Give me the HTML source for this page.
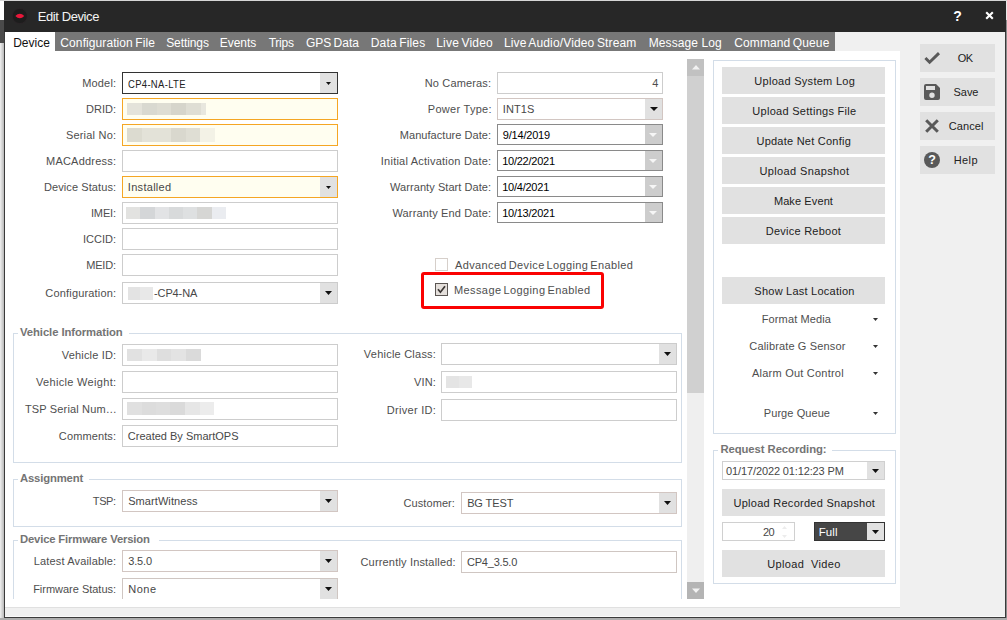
<!DOCTYPE html>
<html lang="en"><head><meta charset="utf-8"><title>Edit Device</title>
<style>
html,body{margin:0;padding:0}
body{width:1007px;height:620px;position:relative;overflow:hidden;background:#f0f0f0;font-family:"Liberation Sans", sans-serif;font-size:11px}
body div,body span.t,body svg{position:absolute}
.t{white-space:pre;display:block}
</style></head><body>
<div style="left:0px;top:0px;width:1007px;height:1px;background:#d6d6d6;"></div>
<div style="left:0px;top:1px;width:4px;height:19px;background:#ffffff;"></div>
<div style="left:0px;top:20px;width:4px;height:23px;background:#4a4a4a;"></div>
<div style="left:0px;top:43px;width:4px;height:577px;background:linear-gradient(90deg,#f0f0f0,#b8b8b8);"></div>
<div style="left:1006px;top:1px;width:1px;height:19px;background:#e8e8e8;"></div>
<div style="left:1006px;top:20px;width:1px;height:600px;background:#8c8c8c;"></div>
<div style="left:0px;top:618px;width:1007px;height:2px;background:#adadad;"></div>
<div style="left:4px;top:1px;width:1002px;height:617px;background:#3a3a3a;"></div>
<div style="left:5px;top:32px;width:1000px;height:585px;background:#f0f0f0;"></div>
<div style="left:5px;top:616px;width:1000px;height:1px;background:#fafafa;"></div>
<div style="left:4px;top:1px;width:1002px;height:31px;background:#272727;"></div>
<svg style="left:11px;top:7px" width="18" height="18" viewBox="0 0 18 18"><circle cx="8.8" cy="9" r="7.6" fill="#1d1d1d" stroke="#2c2428" stroke-width="0.8"/><path d="M4.3 9 Q8.8 4.3 13.3 9 Q8.8 13.7 4.3 9 Z" fill="#e8173a"/></svg>
<span class="t" id="t0" style="left:37.70px;top:6.80px;font-size:13px;color:#f4f4f4;line-height:20px;letter-spacing:-0.407px;">Edit Device</span>
<span class="t" id="t1" style="left:953.15px;top:6.35px;font-size:14px;color:#ffffff;line-height:20px;letter-spacing:0.150px;font-weight:bold;">?</span>
<svg style="left:985px;top:11px" width="9" height="9" viewBox="0 0 9 9"><path d="M1.2 1.2 L7.8 7.8 M7.8 1.2 L1.2 7.8" stroke="#fff" stroke-width="2.1" fill="none"/></svg>
<div style="left:5px;top:32px;width:830px;height:19px;background:#777777;"></div>
<div style="left:5px;top:32px;width:50px;height:19px;background:#ffffff;"></div>
<div style="left:5px;top:51px;width:895px;height:556px;background:#ffffff;"></div>
<div style="left:5px;top:607px;width:895px;height:1px;background:#e0e0e0;"></div>
<span class="t" id="t2" style="left:13.15px;top:32.84px;font-size:12px;color:#111;line-height:20px;letter-spacing:0.043px;">Device</span>
<span class="t" id="t3" style="left:60.37px;top:32.84px;font-size:12px;color:#fff;line-height:20px;letter-spacing:0.085px;word-spacing:-1.0px;">Configuration File</span>
<span class="t" id="t4" style="left:166.15px;top:32.84px;font-size:12px;color:#fff;line-height:20px;letter-spacing:-0.088px;">Settings</span>
<span class="t" id="t5" style="left:219.67px;top:32.84px;font-size:12px;color:#fff;line-height:20px;letter-spacing:0.003px;">Events</span>
<span class="t" id="t6" style="left:268.74px;top:32.84px;font-size:12px;color:#fff;line-height:20px;letter-spacing:-0.267px;">Trips</span>
<span class="t" id="t7" style="left:305.89px;top:32.84px;font-size:12px;color:#fff;line-height:20px;letter-spacing:0.013px;word-spacing:-1.0px;">GPS Data</span>
<span class="t" id="t8" style="left:370.78px;top:32.84px;font-size:12px;color:#fff;line-height:20px;letter-spacing:0.154px;word-spacing:-1.0px;">Data Files</span>
<span class="t" id="t9" style="left:436.26px;top:32.84px;font-size:12px;color:#fff;line-height:20px;letter-spacing:0.180px;word-spacing:-1.0px;">Live Video</span>
<span class="t" id="t10" style="left:503.89px;top:32.84px;font-size:12px;color:#fff;line-height:20px;letter-spacing:0.149px;word-spacing:-1.0px;">Live Audio/Video Stream</span>
<span class="t" id="t11" style="left:648.78px;top:32.84px;font-size:12px;color:#fff;line-height:20px;letter-spacing:0.078px;">Message Log</span>
<span class="t" id="t12" style="left:734.26px;top:32.84px;font-size:12px;color:#fff;line-height:20px;letter-spacing:0.112px;word-spacing:-1.0px;">Command Queue</span>
<span class="t" id="t13" style="left:82.26px;top:73.19px;font-size:11px;color:#4e4e4e;line-height:20px;letter-spacing:0.156px;">Model:</span>
<span class="t" id="t14" style="left:86.00px;top:99.19px;font-size:11px;color:#4e4e4e;line-height:20px;letter-spacing:0.028px;">DRID:</span>
<span class="t" id="t15" style="left:65.89px;top:125.19px;font-size:11px;color:#4e4e4e;line-height:20px;letter-spacing:0.204px;">Serial No:</span>
<span class="t" id="t16" style="left:46.00px;top:151.19px;font-size:11px;color:#4e4e4e;line-height:20px;letter-spacing:0.220px;">MACAddress:</span>
<span class="t" id="t17" style="left:44.00px;top:177.19px;font-size:11px;color:#4e4e4e;line-height:20px;letter-spacing:0.087px;">Device Status:</span>
<span class="t" id="t18" style="left:90.96px;top:203.19px;font-size:11px;color:#4e4e4e;line-height:20px;letter-spacing:-0.143px;">IMEI:</span>
<span class="t" id="t19" style="left:82.96px;top:229.19px;font-size:11px;color:#4e4e4e;line-height:20px;letter-spacing:0.019px;">ICCID:</span>
<span class="t" id="t20" style="left:86.26px;top:255.19px;font-size:11px;color:#4e4e4e;line-height:20px;letter-spacing:-0.190px;">MEID:</span>
<span class="t" id="t21" style="left:45.37px;top:283.19px;font-size:11px;color:#4e4e4e;line-height:20px;letter-spacing:0.173px;">Configuration:</span>
<div style="left:122px;top:72px;width:216px;height:22px;background:#fff;border:1px solid #333;box-sizing:border-box;"></div>
<div style="left:320px;top:73px;width:17px;height:20px;background:#e1e1e1;"></div>
<svg style="left:326.0px;top:81.5px" width="5" height="3" viewBox="0 0 5 3"><path d="M0 0 H5 L2.5 3 Z" fill="#111"/></svg>
<span class="t" id="t22" style="left:128.15px;top:73.99px;font-size:11px;color:#222;line-height:20px;letter-spacing:0.383px;transform:scaleX(0.86);transform-origin:0 0;">CP4-NA-LTE</span>
<div style="left:122px;top:98px;width:216px;height:22px;background:#fffef0;border:1px solid #f5a623;box-sizing:border-box;"></div>
<div style="left:127px;top:103px;width:15px;height:12px;background:#e4e3da;"></div>
<div style="left:142px;top:103px;width:15px;height:12px;background:#d9d9d0;"></div>
<div style="left:157px;top:103px;width:14px;height:12px;background:#deddd3;"></div>
<div style="left:171px;top:103px;width:15px;height:12px;background:#d6d5cb;"></div>
<div style="left:186px;top:103px;width:15px;height:12px;background:#dfded4;"></div>
<div style="left:201px;top:103px;width:5px;height:12px;background:#e8e7de;"></div>
<div style="left:122px;top:124px;width:216px;height:22px;background:#fffef0;border:1px solid #f5a623;box-sizing:border-box;"></div>
<div style="left:127px;top:128px;width:15px;height:14px;background:#dcdbd0;"></div>
<div style="left:142px;top:128px;width:14px;height:14px;background:#e3e2d8;"></div>
<div style="left:156px;top:128px;width:15px;height:14px;background:#e3e2d8;"></div>
<div style="left:171px;top:128px;width:15px;height:14px;background:#d9d8ce;"></div>
<div style="left:186px;top:128px;width:14px;height:14px;background:#dfded4;"></div>
<div style="left:200px;top:128px;width:15px;height:14px;background:#f3f2e6;"></div>
<div style="left:122px;top:150px;width:216px;height:22px;background:#fff;border:1px solid #cdcdcd;box-sizing:border-box;"></div>
<div style="left:122px;top:176px;width:216px;height:22px;background:#fffef0;border:1px solid #f5a623;box-sizing:border-box;"></div>
<div style="left:320px;top:177px;width:17px;height:20px;background:#e1e1e1;"></div>
<svg style="left:326.0px;top:185.5px" width="5" height="3" viewBox="0 0 5 3"><path d="M0 0 H5 L2.5 3 Z" fill="#111"/></svg>
<span class="t" id="t23" style="left:127.85px;top:177.19px;font-size:11px;color:#474747;line-height:20px;letter-spacing:0.287px;">Installed</span>
<div style="left:122px;top:202px;width:216px;height:22px;background:#fff;border:1px solid #cdcdcd;box-sizing:border-box;"></div>
<div style="left:126px;top:207px;width:14px;height:12px;background:#e2e2e0;"></div>
<div style="left:140px;top:207px;width:15px;height:12px;background:#d4d6d8;"></div>
<div style="left:155px;top:207px;width:14px;height:12px;background:#e2e3e5;"></div>
<div style="left:169px;top:207px;width:14px;height:12px;background:#d8dadb;"></div>
<div style="left:183px;top:207px;width:14px;height:12px;background:#dee0e1;"></div>
<div style="left:197px;top:207px;width:15px;height:12px;background:#d6d6d4;"></div>
<div style="left:212px;top:207px;width:14px;height:12px;background:#eaecf0;"></div>
<div style="left:122px;top:228px;width:216px;height:22px;background:#fff;border:1px solid #cdcdcd;box-sizing:border-box;"></div>
<div style="left:122px;top:254px;width:216px;height:22px;background:#fff;border:1px solid #cdcdcd;box-sizing:border-box;"></div>
<div style="left:122px;top:282px;width:216px;height:22px;background:#fff;border:1px solid #cccccc;box-sizing:border-box;"></div>
<div style="left:320px;top:283px;width:17px;height:20px;background:#e1e1e1;"></div>
<svg style="left:325.0px;top:291.0px" width="7" height="4" viewBox="0 0 7 4"><path d="M0 0 H7 L3.5 4 Z" fill="#111"/></svg>
<div style="left:128px;top:287px;width:12px;height:13px;background:#e3e3e3;"></div>
<div style="left:140px;top:287px;width:13px;height:13px;background:#e8e8e8;"></div>
<span class="t" id="t24" style="left:154.00px;top:283.19px;font-size:11px;color:#474747;line-height:20px;letter-spacing:-0.111px;">-CP4-NA</span>
<span class="t" id="t25" style="left:424.78px;top:73.19px;font-size:11px;color:#4e4e4e;line-height:20px;letter-spacing:0.148px;">No Cameras:</span>
<span class="t" id="t26" style="left:427.78px;top:99.19px;font-size:11px;color:#4e4e4e;line-height:20px;letter-spacing:0.284px;">Power Type:</span>
<span class="t" id="t27" style="left:399.78px;top:125.19px;font-size:11px;color:#4e4e4e;line-height:20px;letter-spacing:0.046px;">Manufacture Date:</span>
<span class="t" id="t28" style="left:380.85px;top:151.19px;font-size:11px;color:#4e4e4e;line-height:20px;letter-spacing:0.223px;">Initial Activation Date:</span>
<span class="t" id="t29" style="left:390.07px;top:177.19px;font-size:11px;color:#4e4e4e;line-height:20px;letter-spacing:0.062px;">Warranty Start Date:</span>
<span class="t" id="t30" style="left:392.48px;top:203.19px;font-size:11px;color:#4e4e4e;line-height:20px;letter-spacing:0.144px;">Warranty End Date:</span>
<div style="left:497px;top:72px;width:166px;height:22px;background:#fff;border:1px solid #cdcdcd;box-sizing:border-box;"></div>
<span class="t" id="t31" style="left:652.15px;top:73.19px;font-size:11px;color:#4e4e4e;line-height:20px;letter-spacing:0.150px;">4</span>
<div style="left:497px;top:98px;width:166px;height:22px;background:#fff;border:1px solid #d2c6c2;box-sizing:border-box;"></div>
<div style="left:645px;top:99px;width:17px;height:20px;background:#e1e1e1;"></div>
<svg style="left:649.5px;top:107.0px" width="8" height="4" viewBox="0 0 8 4"><path d="M0 0 H8 L4.0 4 Z" fill="#111"/></svg>
<span class="t" id="t32" style="left:502.85px;top:99.19px;font-size:11px;color:#474747;line-height:20px;letter-spacing:0.079px;">INT1S</span>
<div style="left:497px;top:124px;width:166px;height:21px;background:#fff;border:1px solid #8a8a8a;box-sizing:border-box;"></div>
<div style="left:645px;top:125px;width:17px;height:19px;background:#cdcdcd;"></div>
<svg style="left:649.3px;top:132.5px" width="8" height="4" viewBox="0 0 8 4"><path d="M0 0 H8 L4.0 4 Z" fill="#f6f6f6"/></svg>
<span class="t" id="t33" style="left:502.85px;top:125.19px;font-size:11px;color:#000;line-height:20px;letter-spacing:-0.209px;">9/14/2019</span>
<div style="left:497px;top:150px;width:166px;height:21px;background:#fff;border:1px solid #8a8a8a;box-sizing:border-box;"></div>
<div style="left:645px;top:151px;width:17px;height:19px;background:#cdcdcd;"></div>
<svg style="left:649.3px;top:158.5px" width="8" height="4" viewBox="0 0 8 4"><path d="M0 0 H8 L4.0 4 Z" fill="#f6f6f6"/></svg>
<span class="t" id="t34" style="left:502.15px;top:151.19px;font-size:11px;color:#000;line-height:20px;letter-spacing:-0.232px;">10/22/2021</span>
<div style="left:497px;top:176px;width:166px;height:21px;background:#fff;border:1px solid #8a8a8a;box-sizing:border-box;"></div>
<div style="left:645px;top:177px;width:17px;height:19px;background:#cdcdcd;"></div>
<svg style="left:649.3px;top:184.5px" width="8" height="4" viewBox="0 0 8 4"><path d="M0 0 H8 L4.0 4 Z" fill="#f6f6f6"/></svg>
<span class="t" id="t35" style="left:502.15px;top:177.19px;font-size:11px;color:#000;line-height:20px;letter-spacing:-0.227px;">10/4/2021</span>
<div style="left:497px;top:202px;width:166px;height:21px;background:#fff;border:1px solid #8a8a8a;box-sizing:border-box;"></div>
<div style="left:645px;top:203px;width:17px;height:19px;background:#cdcdcd;"></div>
<svg style="left:649.3px;top:210.5px" width="8" height="4" viewBox="0 0 8 4"><path d="M0 0 H8 L4.0 4 Z" fill="#f6f6f6"/></svg>
<span class="t" id="t36" style="left:502.15px;top:203.19px;font-size:11px;color:#000;line-height:20px;letter-spacing:-0.232px;">10/13/2021</span>
<div style="left:435px;top:258px;width:13px;height:13px;background:#fff;border:1px solid #d6cfca;box-sizing:border-box;"></div>
<span class="t" id="t37" style="left:454.96px;top:255.19px;font-size:11px;color:#4e4e4e;line-height:20px;letter-spacing:0.373px;word-spacing:-1.5px;">Advanced Device Logging Enabled</span>
<div style="left:421px;top:272px;width:183px;height:37px;border:3px solid #fa0202;box-sizing:border-box;border-radius:3px;"></div>
<div style="left:435px;top:283px;width:13px;height:13px;background:#e4dfdb;border:1px solid #5a5552;box-sizing:border-box;"></div>
<svg style="left:435px;top:283px" width="13" height="13" viewBox="0 0 13 13"><path d="M3 6.2 L5.4 9.2 L10 3.2" stroke="#3a3533" stroke-width="1.7" fill="none"/></svg>
<span class="t" id="t38" style="left:453.93px;top:279.69px;font-size:11px;color:#4e4e4e;line-height:20px;letter-spacing:0.411px;word-spacing:-1.5px;">Message Logging Enabled</span>
<div style="left:13px;top:333px;width:669px;height:130px;border:1px solid #d3dde8;box-sizing:border-box;"></div>
<div style="left:18px;top:333px;width:111px;height:1px;background:#fff;"></div>
<span class="t" id="t39" style="left:20.00px;top:321.98px;font-size:11.3px;color:#747474;line-height:20px;letter-spacing:-0.081px;font-weight:bold;">Vehicle Information</span>
<div style="left:13px;top:479px;width:669px;height:48px;border:1px solid #d3dde8;box-sizing:border-box;"></div>
<div style="left:18px;top:479px;width:71px;height:1px;background:#fff;"></div>
<span class="t" id="t40" style="left:20.00px;top:467.98px;font-size:11.3px;color:#747474;line-height:20px;letter-spacing:-0.159px;font-weight:bold;">Assignment</span>
<div style="left:13px;top:540px;width:669px;height:59px;border:1px solid #d3dde8;box-sizing:border-box;border-bottom:none;"></div>
<div style="left:18px;top:540px;width:141px;height:1px;background:#fff;"></div>
<span class="t" id="t41" style="left:20.00px;top:528.98px;font-size:11.3px;color:#747474;line-height:20px;letter-spacing:-0.173px;font-weight:bold;">Device Firmware Version</span>
<span class="t" id="t42" style="left:61.85px;top:345.19px;font-size:11px;color:#4e4e4e;line-height:20px;letter-spacing:0.162px;">Vehicle ID:</span>
<span class="t" id="t43" style="left:36.00px;top:372.19px;font-size:11px;color:#4e4e4e;line-height:20px;letter-spacing:0.317px;">Vehicle Weight:</span>
<span class="t" id="t44" style="left:25.00px;top:399.19px;font-size:11px;color:#4e4e4e;line-height:20px;letter-spacing:0.153px;">TSP Serial Num…</span>
<span class="t" id="t45" style="left:58.85px;top:426.19px;font-size:11px;color:#4e4e4e;line-height:20px;letter-spacing:0.121px;">Comments:</span>
<div style="left:122px;top:344px;width:216px;height:22px;background:#fff;border:1px solid #cdcdcd;box-sizing:border-box;"></div>
<div style="left:127px;top:349px;width:15px;height:12px;background:#e1e1e1;"></div>
<div style="left:142px;top:349px;width:15px;height:12px;background:#e9e9e9;"></div>
<div style="left:157px;top:349px;width:14px;height:12px;background:#dedede;"></div>
<div style="left:171px;top:349px;width:15px;height:12px;background:#e3e3e3;"></div>
<div style="left:186px;top:349px;width:15px;height:12px;background:#dadada;"></div>
<div style="left:122px;top:371px;width:216px;height:22px;background:#fff;border:1px solid #cdcdcd;box-sizing:border-box;"></div>
<div style="left:122px;top:398px;width:216px;height:22px;background:#fff;border:1px solid #cdcdcd;box-sizing:border-box;"></div>
<div style="left:127px;top:402px;width:15px;height:13px;background:#e0e0e0;"></div>
<div style="left:142px;top:402px;width:14px;height:13px;background:#dcdcdc;"></div>
<div style="left:156px;top:402px;width:14px;height:13px;background:#dedede;"></div>
<div style="left:170px;top:402px;width:15px;height:13px;background:#dadada;"></div>
<div style="left:185px;top:402px;width:15px;height:13px;background:#e6e6e6;"></div>
<div style="left:200px;top:402px;width:14px;height:13px;background:#ececec;"></div>
<div style="left:122px;top:425px;width:216px;height:22px;background:#fff;border:1px solid #cdcdcd;box-sizing:border-box;"></div>
<span class="t" id="t46" style="left:127.85px;top:426.19px;font-size:11px;color:#474747;line-height:20px;letter-spacing:-0.001px;">Created By SmartOPS</span>
<span class="t" id="t47" style="left:363.85px;top:344.19px;font-size:11px;color:#4e4e4e;line-height:20px;letter-spacing:0.228px;">Vehicle Class:</span>
<span class="t" id="t48" style="left:414.00px;top:372.19px;font-size:11px;color:#4e4e4e;line-height:20px;letter-spacing:0.171px;">VIN:</span>
<span class="t" id="t49" style="left:386.67px;top:400.19px;font-size:11px;color:#4e4e4e;line-height:20px;letter-spacing:0.314px;">Driver ID:</span>
<div style="left:441px;top:343px;width:236px;height:22px;background:#fff;border:1px solid #cccccc;box-sizing:border-box;"></div>
<div style="left:659px;top:344px;width:17px;height:20px;background:#e1e1e1;"></div>
<svg style="left:664.0px;top:352.0px" width="7" height="4" viewBox="0 0 7 4"><path d="M0 0 H7 L3.5 4 Z" fill="#111"/></svg>
<div style="left:441px;top:371px;width:236px;height:22px;background:#fff;border:1px solid #cdcdcd;box-sizing:border-box;"></div>
<div style="left:446px;top:376px;width:13px;height:12px;background:#e4e4e4;"></div>
<div style="left:459px;top:376px;width:13px;height:12px;background:#e8e8e8;"></div>
<div style="left:441px;top:399px;width:236px;height:22px;background:#fff;border:1px solid #cdcdcd;box-sizing:border-box;"></div>
<span class="t" id="t50" style="left:92.85px;top:491.19px;font-size:11px;color:#4e4e4e;line-height:20px;letter-spacing:-0.415px;">TSP:</span>
<div style="left:122px;top:490px;width:216px;height:22px;background:#fff;border:1px solid #d2c6c2;box-sizing:border-box;"></div>
<div style="left:320px;top:491px;width:17px;height:20px;background:#e1e1e1;"></div>
<svg style="left:325.0px;top:499.0px" width="7" height="4" viewBox="0 0 7 4"><path d="M0 0 H7 L3.5 4 Z" fill="#111"/></svg>
<span class="t" id="t51" style="left:128.15px;top:491.19px;font-size:11px;color:#474747;line-height:20px;letter-spacing:0.082px;">SmartWitness</span>
<span class="t" id="t52" style="left:403.48px;top:493.19px;font-size:11px;color:#4e4e4e;line-height:20px;letter-spacing:0.086px;">Customer:</span>
<div style="left:461px;top:492px;width:216px;height:22px;background:#fff;border:1px solid #d2c6c2;box-sizing:border-box;"></div>
<div style="left:659px;top:493px;width:17px;height:20px;background:#e1e1e1;"></div>
<svg style="left:664.0px;top:501.0px" width="7" height="4" viewBox="0 0 7 4"><path d="M0 0 H7 L3.5 4 Z" fill="#111"/></svg>
<span class="t" id="t53" style="left:467.15px;top:493.19px;font-size:11px;color:#474747;line-height:20px;letter-spacing:-0.107px;">BG TEST</span>
<span class="t" id="t54" style="left:33.78px;top:551.19px;font-size:11px;color:#4e4e4e;line-height:20px;letter-spacing:0.151px;">Latest Available:</span>
<div style="left:122px;top:550px;width:216px;height:22px;background:#fff;border:1px solid #d2c6c2;box-sizing:border-box;"></div>
<div style="left:320px;top:551px;width:17px;height:20px;background:#e1e1e1;"></div>
<svg style="left:325.0px;top:559.0px" width="7" height="4" viewBox="0 0 7 4"><path d="M0 0 H7 L3.5 4 Z" fill="#111"/></svg>
<span class="t" id="t55" style="left:128.15px;top:551.19px;font-size:11px;color:#474747;line-height:20px;letter-spacing:-0.124px;">3.5.0</span>
<span class="t" id="t56" style="left:360.48px;top:552.19px;font-size:11px;color:#4e4e4e;line-height:20px;letter-spacing:0.176px;">Currently Installed:</span>
<div style="left:461px;top:551px;width:216px;height:22px;background:#fff;border:1px solid #cfc6c2;box-sizing:border-box;"></div>
<span class="t" id="t57" style="left:467.00px;top:552.19px;font-size:11px;color:#474747;line-height:20px;letter-spacing:-0.214px;">CP4_3.5.0</span>
<span class="t" id="t58" style="left:33.15px;top:579.19px;font-size:11px;color:#4e4e4e;line-height:20px;letter-spacing:-0.015px;">Firmware Status:</span>
<div style="left:122px;top:578px;width:216px;height:21px;background:#fff;border:1px solid #cfc6c2;border-bottom:none;box-sizing:border-box;"></div>
<div style="left:320px;top:579px;width:17px;height:20px;background:#e1e1e1;"></div>
<svg style="left:325.0px;top:587.0px" width="7" height="4" viewBox="0 0 7 4"><path d="M0 0 H7 L3.5 4 Z" fill="#111"/></svg>
<span class="t" id="t59" style="left:128.15px;top:579.19px;font-size:11px;color:#474747;line-height:20px;letter-spacing:0.557px;">None</span>
<div style="left:687px;top:59px;width:17px;height:540px;background:#efefef;"></div>
<div style="left:687px;top:59px;width:17px;height:17px;background:#c1c1c1;"></div>
<div style="left:687px;top:76px;width:17px;height:317px;background:#d0d0d0;"></div>
<div style="left:687px;top:582px;width:17px;height:17px;background:#b4b4b4;"></div>
<svg style="left:691.5px;top:65px" width="8" height="5" viewBox="0 0 8 5"><path d="M0 4.5 H8 L4 0 Z" fill="#f2f2f2"/></svg>
<svg style="left:691.5px;top:588px" width="8" height="5" viewBox="0 0 8 5"><path d="M0 0.5 H8 L4 5 Z" fill="#f2f2f2"/></svg>
<div style="left:713px;top:60px;width:183px;height:374px;border:1px solid #d3dde8;box-sizing:border-box;"></div>
<div style="left:722px;top:67px;width:163px;height:27px;background:#e1e1e1;"></div>
<span class="t" id="t60" style="left:754.37px;top:71.19px;font-size:11px;color:#222;line-height:20px;letter-spacing:0.277px;">Upload System Log</span>
<div style="left:722px;top:97px;width:163px;height:27px;background:#e1e1e1;"></div>
<span class="t" id="t61" style="left:752.37px;top:101.19px;font-size:11px;color:#222;line-height:20px;letter-spacing:0.281px;">Upload Settings File</span>
<div style="left:722px;top:127px;width:163px;height:27px;background:#e1e1e1;"></div>
<span class="t" id="t62" style="left:756.48px;top:131.19px;font-size:11px;color:#222;line-height:20px;letter-spacing:0.239px;">Update Net Config</span>
<div style="left:722px;top:157px;width:163px;height:27px;background:#e1e1e1;"></div>
<span class="t" id="t63" style="left:759.48px;top:161.19px;font-size:11px;color:#222;line-height:20px;letter-spacing:0.370px;">Upload Snapshot</span>
<div style="left:722px;top:187px;width:163px;height:27px;background:#e1e1e1;"></div>
<span class="t" id="t64" style="left:773.89px;top:191.19px;font-size:11px;color:#222;line-height:20px;letter-spacing:0.108px;">Make Event</span>
<div style="left:722px;top:217px;width:163px;height:27px;background:#e1e1e1;"></div>
<span class="t" id="t65" style="left:765.78px;top:221.19px;font-size:11px;color:#222;line-height:20px;letter-spacing:0.248px;">Device Reboot</span>
<div style="left:722px;top:277px;width:163px;height:27px;background:#e1e1e1;"></div>
<span class="t" id="t66" style="left:754.37px;top:281.19px;font-size:11px;color:#222;line-height:20px;letter-spacing:0.234px;">Show Last Location</span>
<span class="t" id="t67" style="left:761.78px;top:309.49px;font-size:11px;color:#4e4e4e;line-height:20px;letter-spacing:0.118px;">Format Media</span>
<svg style="left:872.7px;top:318.3px" width="5" height="3" viewBox="0 0 5 3"><path d="M0 0 H5 L2.5 3 Z" fill="#333"/></svg>
<span class="t" id="t68" style="left:749.37px;top:336.19px;font-size:11px;color:#4e4e4e;line-height:20px;letter-spacing:0.143px;">Calibrate G Sensor</span>
<svg style="left:872.7px;top:345.0px" width="5" height="3" viewBox="0 0 5 3"><path d="M0 0 H5 L2.5 3 Z" fill="#333"/></svg>
<span class="t" id="t69" style="left:752.00px;top:363.19px;font-size:11px;color:#4e4e4e;line-height:20px;letter-spacing:0.227px;">Alarm Out Control</span>
<svg style="left:872.7px;top:372.0px" width="5" height="3" viewBox="0 0 5 3"><path d="M0 0 H5 L2.5 3 Z" fill="#333"/></svg>
<span class="t" id="t70" style="left:763.78px;top:402.99px;font-size:11px;color:#4e4e4e;line-height:20px;letter-spacing:0.079px;">Purge Queue</span>
<svg style="left:872.7px;top:411.8px" width="5" height="3" viewBox="0 0 5 3"><path d="M0 0 H5 L2.5 3 Z" fill="#333"/></svg>
<div style="left:713px;top:450px;width:183px;height:134px;border:1px solid #d3dde8;box-sizing:border-box;"></div>
<div style="left:718px;top:450px;width:114px;height:1px;background:#fff;"></div>
<span class="t" id="t71" style="left:720.41px;top:438.98px;font-size:11.3px;color:#747474;line-height:20px;letter-spacing:-0.069px;font-weight:bold;">Request Recording:</span>
<div style="left:722px;top:461px;width:163px;height:19px;background:#fff;border:1px solid #d0d0d0;box-sizing:border-box;"></div>
<div style="left:867px;top:462px;width:17px;height:17px;background:#e1e1e1;"></div>
<svg style="left:872.0px;top:468.5px" width="7" height="4" viewBox="0 0 7 4"><path d="M0 0 H7 L3.5 4 Z" fill="#111"/></svg>
<span class="t" id="t72" style="left:726.11px;top:460.99px;font-size:11px;color:#474747;line-height:20px;letter-spacing:-0.130px;">01/17/2022 01:12:23 PM</span>
<div style="left:722px;top:489px;width:163px;height:27px;background:#e1e1e1;"></div>
<span class="t" id="t73" style="left:733.48px;top:493.19px;font-size:11px;color:#222;line-height:20px;letter-spacing:0.270px;">Upload Recorded Snapshot</span>
<div style="left:722px;top:522px;width:73px;height:19px;background:#fff;border:1px solid #d0d0d0;box-sizing:border-box;"></div>
<span class="t" id="t74" style="left:763.00px;top:522.19px;font-size:11px;color:#474747;line-height:20px;letter-spacing:-0.708px;">20</span>
<svg style="left:782px;top:526px" width="5" height="12" viewBox="0 0 5 12"><path d="M0 3 H5 L2.5 0 Z M0 9 H5 L2.5 12 Z" fill="#ececec"/></svg>
<div style="left:814px;top:522px;width:71px;height:19px;background:#464646;border:1px solid #333;box-sizing:border-box;"></div>
<div style="left:867px;top:523px;width:17px;height:17px;background:#e1e1e1;"></div>
<svg style="left:872.0px;top:529.5px" width="7" height="4" viewBox="0 0 7 4"><path d="M0 0 H7 L3.5 4 Z" fill="#111"/></svg>
<span class="t" id="t75" style="left:818.78px;top:522.02px;font-size:11.5px;color:#fff;line-height:20px;letter-spacing:0.048px;">Full</span>
<div style="left:722px;top:550px;width:163px;height:27px;background:#e1e1e1;"></div>
<span class="t" id="t76" style="left:767.26px;top:553.99px;font-size:11px;color:#222;line-height:20px;letter-spacing:0.351px;">Upload  Video</span>
<div style="left:920px;top:44px;width:75px;height:28px;background:#e1e1e1;"></div>
<span class="t" id="t77" style="left:957.85px;top:48.09px;font-size:11px;color:#222;line-height:20px;letter-spacing:-0.556px;">OK</span>
<div style="left:920px;top:78px;width:75px;height:28px;background:#e1e1e1;"></div>
<span class="t" id="t78" style="left:953.48px;top:82.09px;font-size:11px;color:#222;line-height:20px;letter-spacing:-0.024px;">Save</span>
<div style="left:920px;top:112px;width:75px;height:28px;background:#e1e1e1;"></div>
<span class="t" id="t79" style="left:948.85px;top:116.09px;font-size:11px;color:#222;line-height:20px;letter-spacing:0.079px;">Cancel</span>
<div style="left:920px;top:146px;width:75px;height:28px;background:#e1e1e1;"></div>
<span class="t" id="t80" style="left:953.67px;top:150.09px;font-size:11px;color:#222;line-height:20px;letter-spacing:0.437px;">Help</span>
<svg style="left:923px;top:50px" width="18" height="16" viewBox="0 0 18 16"><path d="M2.4 8 L6.6 12.3 L16 3.1" stroke="#595959" stroke-width="2.9" fill="none"/></svg>
<svg style="left:924px;top:84px" width="16" height="16" viewBox="0 0 16 16"><path fill-rule="evenodd" d="M2 0 H12 L16 4 V14 A2 2 0 0 1 14 16 H2 A2 2 0 0 1 0 14 V2 A2 2 0 0 1 2 0 Z M2 2 V6 H11 V2 Z M8 8.6 A2.7 2.7 0 1 0 8 14 A2.7 2.7 0 1 0 8 8.6 Z" fill="#595959"/></svg>
<svg style="left:924px;top:118px" width="16" height="16" viewBox="0 0 16 16"><path d="M2.2 2.2 L13.8 13.8 M13.8 2.2 L2.2 13.8" stroke="#595959" stroke-width="3" fill="none"/></svg>
<svg style="left:924px;top:152px" width="16" height="16" viewBox="0 0 16 16"><circle cx="8" cy="8" r="8" fill="#595959"/><text x="8" y="12.4" text-anchor="middle" font-family="Liberation Sans, sans-serif" font-weight="bold" font-size="12.5" fill="#fff">?</text></svg>
</body></html>
